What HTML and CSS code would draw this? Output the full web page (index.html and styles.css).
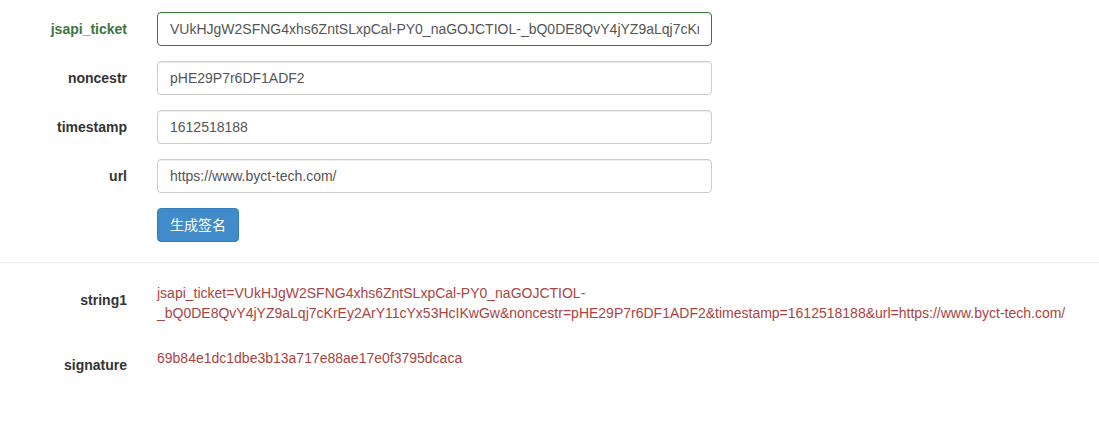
FILE: index.html
```html
<!DOCTYPE html>
<html lang="zh-CN">
<head>
<meta charset="utf-8">
<title>JS-SDK 签名</title>
<link rel="stylesheet" href="styles.css">
</head>
<body>
<form class="form">
  <div class="group has-success">
    <label class="label">jsapi_ticket</label>
    <div class="field"><input class="control" type="text" value="VUkHJgW2SFNG4xhs6ZntSLxpCal-PY0_naGOJCTIOL-_bQ0DE8QvY4jYZ9aLqj7cKrEy2ArY11cYx53HcIKwGw"></div>
  </div>
  <div class="group">
    <label class="label">noncestr</label>
    <div class="field"><input class="control" type="text" value="pHE29P7r6DF1ADF2"></div>
  </div>
  <div class="group">
    <label class="label">timestamp</label>
    <div class="field"><input class="control" type="text" value="1612518188"></div>
  </div>
  <div class="group">
    <label class="label">url</label>
    <div class="field"><input class="control" type="text" value="https://www.byct-tech.com/"></div>
  </div>
  <div class="group">
    <div class="spacer"></div>
    <div class="field"><button type="button" class="btn">生成签名</button></div>
  </div>
</form>
<hr class="divider">
<div class="result">
  <div class="group">
    <label class="label">string1</label>
    <div class="value"><p class="text-danger">jsapi_ticket=VUkHJgW2SFNG4xhs6ZntSLxpCal-PY0_naGOJCTIOL-_bQ0DE8QvY4jYZ9aLqj7cKrEy2ArY11cYx53HcIKwGw&amp;noncestr=pHE29P7r6DF1ADF2&amp;timestamp=1612518188&amp;url=https://www.byct-tech.com/</p></div>
  </div>
  <div class="group">
    <label class="label">signature</label>
    <div class="value"><p class="text-danger">69b84e1dc1dbe3b13a717e88ae17e0f3795dcaca</p></div>
  </div>
</div>
</body>
</html>
```

FILE: styles.css
```css
html, body {
  margin: 0;
  padding: 0;
  background: #fff;
}
body {
  font-family: "Liberation Sans", Arial, "Noto Sans CJK SC", sans-serif;
  font-size: 14px;
  line-height: 20px;
  color: #333;
}
.form {
  padding-top: 12px;
}
.group {
  display: grid;
  grid-template-columns: 142px 570px;
  margin-bottom: 15px;
}
.result .group {
  grid-template-columns: 142px 927px;
}
.label {
  padding: 7px 15px 0 0;
  text-align: right;
  font-weight: bold;
  color: #333;
}
.has-success .label {
  color: #3c763d;
}
.field, .value {
  padding-left: 15px;
}
.control {
  display: block;
  box-sizing: border-box;
  width: 100%;
  height: 34px;
  padding: 6px 12px;
  font-family: inherit;
  font-size: 14px;
  line-height: 20px;
  color: #555;
  background: #fff;
  border: 1px solid #ccc;
  border-radius: 4px;
  box-shadow: inset 0 1px 1px rgba(0,0,0,0.075);
  margin: 0;
}
.has-success .control {
  border-color: #3c763d;
}
.btn {
  display: inline-block;
  box-sizing: border-box;
  height: 34px;
  padding: 6px 12px;
  font-family: inherit;
  font-size: 14px;
  line-height: 20px;
  color: #fff;
  background: #428bca;
  border: 1px solid #357ebd;
  border-radius: 4px;
  margin: 0;
}
.divider {
  margin: 20px 0;
  border: 0;
  border-top: 1px solid #eee;
  height: 0;
}
.value p {
  margin: 0 0 10px;
  word-wrap: break-word;
}
.text-danger {
  color: #a94442;
}
```
